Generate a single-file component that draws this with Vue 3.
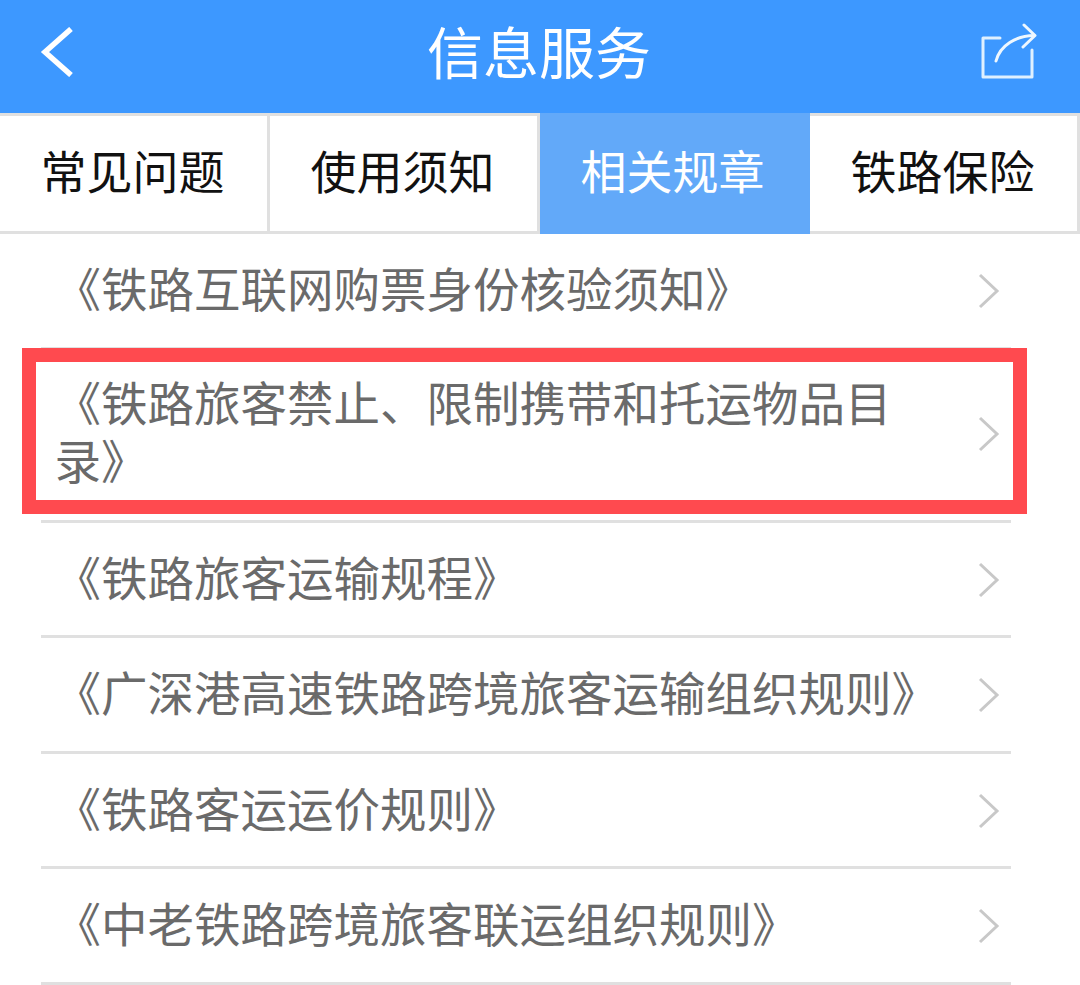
<script setup>
const tabs = ['常见问题', '使用须知', '相关规章', '铁路保险']
const activeTab = 2

const rows = [
  { title: '《铁路互联网购票身份核验须知》' },
  { title: '《铁路旅客禁止、限制携带和托运物品目录》', marked: true },
  { title: '《铁路旅客运输规程》' },
  { title: '《广深港高速铁路跨境旅客运输组织规则》' },
  { title: '《铁路客运运价规则》' },
  { title: '《中老铁路跨境旅客联运组织规则》' }
]
</script>

<template>
  <div class="page">
    <header class="topbar">
      <svg class="back" viewBox="0 0 34 50" width="34" height="50">
        <path d="M31 2 L5 25 L31 48" fill="none" stroke="#fff" stroke-width="5.5" />
      </svg>
      <h1 class="title">信息服务</h1>
      <svg class="share" viewBox="0 0 58 58" width="58" height="58">
        <path d="M20 15 H3 V54 H52 V27" fill="none" stroke="#dff0ff" stroke-width="3" stroke-linejoin="round" stroke-linecap="round" />
        <path d="M16 38 C20 22 36 13 54 12.5" fill="none" stroke="#eef7ff" stroke-width="3" stroke-linecap="round" />
        <path d="M44 2 L55 12.5 L43 24" fill="none" stroke="#eef7ff" stroke-width="3" stroke-linecap="round" stroke-linejoin="round" />
      </svg>
    </header>

    <nav class="tabs">
      <div
        v-for="(tab, i) in tabs"
        :key="tab"
        class="tab"
        :class="{ active: i === activeTab }"
      >{{ tab }}</div>
    </nav>

    <ul class="list">
      <li v-for="row in rows" :key="row.title" class="row">
        <div class="row-inner" :class="{ tall: row.marked }">
          <span class="row-text">{{ row.title }}</span>
          <svg class="chevron" viewBox="0 0 22 36" width="22" height="36">
            <path d="M2 2 L19 18 L2 34" fill="none" stroke="#c8c8c8" stroke-width="3" />
          </svg>
        </div>
        <div v-if="row.marked" class="mark"></div>
      </li>
    </ul>
  </div>
</template>

<style scoped>
.page {
  width: 1080px;
  height: 985px;
  overflow: hidden;
  background: #fff;
  font-family: "Noto Sans CJK SC", "Noto Sans", sans-serif;
}

.topbar {
  height: 113px;
  background: #3d98ff;
  display: grid;
  grid-template-columns: 1fr auto 1fr;
  align-items: center;
  padding: 0 42px 9px 40px;
  box-sizing: border-box;
}

.title {
  margin: 0 0 5px;
  font-size: 56px;
  font-weight: 400;
  line-height: 1;
  color: #fff;
}

.share {
  justify-self: end;
}

.tabs {
  display: grid;
  grid-template-columns: repeat(4, 270px);
  height: 121px;
}

.tab {
  display: flex;
  align-items: center;
  justify-content: center;
  font-size: 46px;
  color: #111;
  box-sizing: border-box;
  padding: 0 2px 10px 0;
  border-top: 3px solid #e0e0e0;
  border-bottom: 3px solid #e0e0e0;
  border-right: 3px solid #e0e0e0;
}

.tab.active {
  background: #62a9f9;
  color: #fff;
  border-color: #62a9f9;
}

.list {
  list-style: none;
  margin: 0;
  padding: 0;
}

.row {
  position: relative;
  padding: 0 69px 0 41px;
}

.row-inner {
  display: flex;
  align-items: center;
  justify-content: space-between;
  min-height: 112.5px;
  padding: 0 0 0 13.5px;
  border-bottom: 3px solid #e0e0e0;
}

.row-inner.tall {
  padding-bottom: 3px;
}

.row-text {
  width: 900px;
  font-size: 46.5px;
  line-height: 58px;
  color: #6a6a6a;
  flex: none;
  padding: 22.5px 0 28.5px;
}

.chevron {
  flex: none;
  margin: 2px 11px 0 -11px;
}

.mark {
  position: absolute;
  left: 22px;
  top: -2px;
  width: 1005px;
  height: 166px;
  box-sizing: border-box;
  border: 14px solid #ff4a4f;
}
</style>
